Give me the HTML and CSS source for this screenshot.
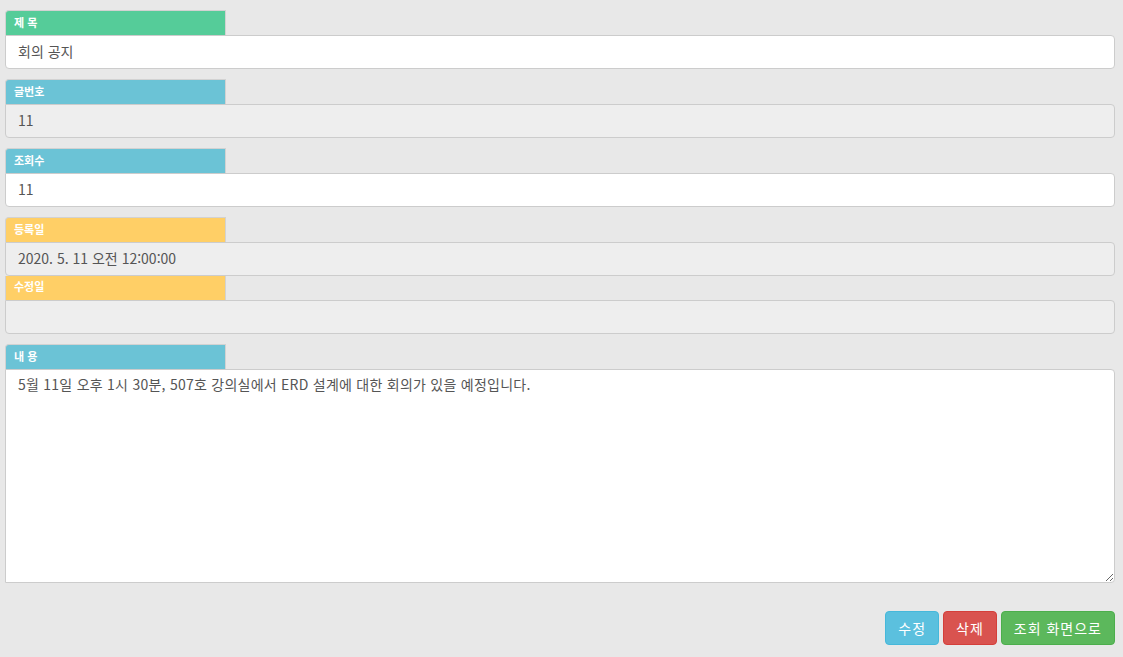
FILE: index.html
```html
<!DOCTYPE html>
<html lang="ko">
<head>
<meta charset="utf-8">
<title>게시글</title>
<link rel="stylesheet" href="styles.css">
</head>
<body>
<div class="page">
  <div class="field">
    <div class="label green">제 목</div>
    <input class="input" type="text" value="회의 공지">
  </div>
  <div class="field">
    <div class="label blue">글번호</div>
    <input class="input ro" type="text" value="11" readonly>
  </div>
  <div class="field">
    <div class="label blue">조회수</div>
    <input class="input" type="text" value="11">
  </div>
  <div class="field tight">
    <div class="label yellow">등록일</div>
    <input class="input ro" type="text" value="2020. 5. 11 오전 12:00:00" readonly>
  </div>
  <div class="field">
    <div class="label yellow short">수정일</div>
    <input class="input ro" type="text" value="" readonly>
  </div>
  <div class="field">
    <div class="label blue">내 용</div>
    <textarea class="input area">5월 11일 오후 1시 30분, 507호 강의실에서 ERD 설계에 대한 회의가 있을 예정입니다.</textarea>
  </div>
  <div class="actions">
    <button class="btn info">수정</button>
    <button class="btn danger">삭제</button>
    <button class="btn success">조회 화면으로</button>
  </div>
</div>
</body>
</html>
```
FILE: styles.css
```css
html, body {
  margin: 0;
  padding: 0;
  background: #e8e8e8;
}
body {
  font-family: "Noto Sans CJK KR", "Noto Sans", sans-serif;
  color: #555;
}
.page {
  padding: 10px 8px 0 5px;
  display: flex;
  flex-direction: column;
}
.field {
  display: flex;
  flex-direction: column;
  margin-bottom: 10px;
}
.field.tight {
  margin-bottom: 0;
}
.label {
  width: 221px;
  height: 25px;
  box-sizing: border-box;
  border: 1px solid #d2d2d2;
  border-bottom: none;
  border-radius: 4px 0 0 0;
  color: #fff;
  font-size: 11px;
  font-weight: bold;
  line-height: 22px;
  padding-left: 8px;
}
.label.short {
  height: 24px;
  border-radius: 0;
  border-top: none;
  line-height: 20px;
}
.green { background: #55cc99; }
.blue { background: #6bc3d6; }
.yellow { background: #ffcf66; }
.input {
  display: block;
  width: 100%;
  box-sizing: border-box;
  height: 34px;
  margin: 0;
  border: 1px solid #ccc;
  border-radius: 0 4px 4px 4px;
  background: #fff;
  color: #555;
  font-family: "Noto Sans CJK KR", "Noto Sans", sans-serif;
  font-size: 14px;
  padding: 0 12px 2px;
  outline: none;
}
.input.ro {
  background: #eee;
}
.area {
  height: 214px;
  padding: 4px 12px;
  line-height: 20px;
  letter-spacing: 0.25px;
  resize: vertical;
  border-radius: 0 4px 4px 0;
}
.actions {
  display: flex;
  justify-content: flex-end;
  gap: 4px;
  margin-top: 18px;
}
.btn {
  height: 34px;
  box-sizing: border-box;
  padding: 0 12px;
  border: 1px solid transparent;
  border-radius: 4px;
  color: #fff;
  font-family: "Noto Sans CJK KR", "Noto Sans", sans-serif;
  font-size: 14px;
  letter-spacing: 1px;
}
.info { background: #5bc0de; border-color: #46b8da; }
.danger { background: #d9534f; border-color: #d43f3a; }
.success { background: #5cb85c; border-color: #4cae4c; }
```
